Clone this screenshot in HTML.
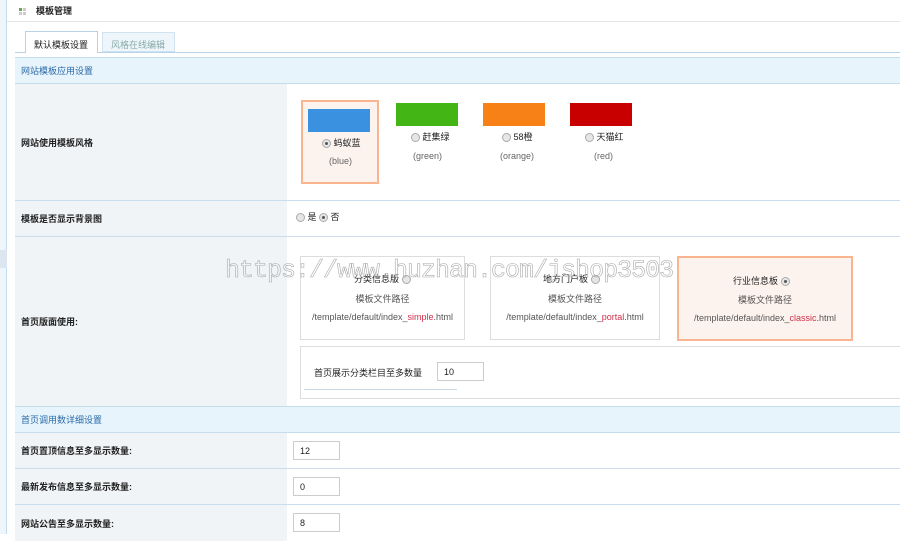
<!DOCTYPE html>
<html><head><meta charset="utf-8"><style>
*{margin:0;padding:0;box-sizing:border-box}
body{width:900px;height:534px;overflow:hidden;background:#fff;font-family:"Liberation Sans","Noto Sans CJK SC",sans-serif;font-size:9px;color:#222;position:relative}
.a{position:absolute}
.lbl{position:absolute;left:15px;width:272px;background:#f1f4f7;border-bottom:1px solid #c9ddee;padding-left:6px;font-weight:bold;font-size:9px;display:flex;align-items:center}
.rowline{position:absolute;left:287px;right:0;border-bottom:1px solid #c9ddee}
.sec{position:absolute;left:15px;right:0;background:#e8f4fc;border-top:1px solid #c5dced;border-bottom:1px solid #c5dced;color:#2a6aa8;font-size:9px;padding-left:6px;display:flex;align-items:center}
.radio{display:inline-block;width:9px;height:9px;border-radius:50%;border:1px solid #aaa;background:#e6e6e6;vertical-align:middle;position:relative}
.radio.on::after{content:"";position:absolute;left:2px;top:2px;width:3px;height:3px;border-radius:50%;background:#555}
.inp{position:absolute;border:1px solid #ccc;background:#fff;font-size:9px;padding-left:6px;display:flex;align-items:center;height:19px}
.card{position:absolute;border:1px solid #ddd;text-align:center;font-size:9px;color:#555}
.red{color:#d0304a}
</style></head><body>
<div class="a" style="left:0;top:0;width:7px;height:534px;background:#eef5fb;border-right:1px solid #c5dced"></div>
<div class="a" style="left:0;top:250px;width:7px;height:18px;background:#dbe6f0"></div>
<div class="a" style="left:7px;top:0;right:0;height:22px;border-bottom:1px solid #e6e6e6;background:#fff"></div>
<div class="a" style="left:19px;top:8px;width:3px;height:3px;background:#6aa84f"></div>
<div class="a" style="left:23px;top:8px;width:3px;height:3px;background:#ccc"></div>
<div class="a" style="left:19px;top:12px;width:3px;height:3px;background:#ccc"></div>
<div class="a" style="left:23px;top:12px;width:3px;height:3px;background:#ccc"></div>
<div class="a" style="left:36px;top:4px;font-size:9px;font-weight:bold">模板管理</div>
<div class="a" style="left:15px;top:52px;right:0;border-top:1px solid #b5d2e6"></div>
<div class="a" style="left:25px;top:31px;width:73px;height:22px;border:1px solid #b5d2e6;border-bottom:none;background:#fff;font-size:9px;padding:6px 0 0 8px">默认模板设置</div>
<div class="a" style="left:102px;top:32px;width:73px;height:20px;border:1px solid #cfe3f0;background:#eef6fb;color:#8aa;font-size:9px;padding:5px 0 0 8px">风格在线编辑</div>
<div class="a" style="left:15px;top:57px;width:1px;height:477px;background:#c5dced"></div>

<div class="sec" style="top:57px;height:27px">网站模板应用设置</div>
<div class="lbl" style="top:84px;height:117px">网站使用模板风格</div>
<div class="rowline" style="top:200px"></div>
<div class="card" style="left:301px;top:100px;width:78px;height:84px;background:#fdf3ee;border:2px solid #fbb490"></div>
<div class="a" style="left:308px;top:109px;width:62px;height:23px;background:#3a91e0"></div>
<div class="a" style="left:322px;top:136px;font-size:9px"><span class="radio on"></span> 蚂蚁蓝</div>
<div class="a" style="left:329px;top:156px;color:#666">(blue)</div>
<div class="a" style="left:396px;top:103px;width:62px;height:23px;background:#43b515"></div>
<div class="a" style="left:411px;top:130px"><span class="radio"></span> 赶集绿</div>
<div class="a" style="left:413px;top:151px;color:#666">(green)</div>
<div class="a" style="left:483px;top:103px;width:62px;height:23px;background:#f78116"></div>
<div class="a" style="left:502px;top:130px"><span class="radio"></span> 58橙</div>
<div class="a" style="left:500px;top:151px;color:#666">(orange)</div>
<div class="a" style="left:570px;top:103px;width:62px;height:23px;background:#c80000"></div>
<div class="a" style="left:585px;top:130px"><span class="radio"></span> 天猫红</div>
<div class="a" style="left:594px;top:151px;color:#666">(red)</div>

<div class="lbl" style="top:201px;height:36px">模板是否显示背景图</div>
<div class="rowline" style="top:236px"></div>
<div class="a" style="left:296px;top:210px"><span class="radio"></span> 是 <span class="radio on"></span> 否</div>

<div class="lbl" style="top:237px;height:170px">首页版面使用:</div>
<div class="card" style="left:300px;top:256px;width:165px;height:84px"></div>
<div class="a" style="left:354px;top:272px">分类信息版 <span class="radio"></span></div>
<div class="a" style="left:300px;top:292px;width:165px;text-align:center;color:#555">模板文件路径</div>
<div class="a" style="left:300px;top:312px;width:165px;text-align:center;color:#555">/template/default/index_<span class="red">simple</span>.html</div>
<div class="card" style="left:490px;top:256px;width:170px;height:84px"></div>
<div class="a" style="left:543px;top:272px">地方门户板 <span class="radio"></span></div>
<div class="a" style="left:490px;top:292px;width:170px;text-align:center;color:#555">模板文件路径</div>
<div class="a" style="left:490px;top:312px;width:170px;text-align:center;color:#555">/template/default/index_<span class="red">portal</span>.html</div>
<div class="card" style="left:677px;top:256px;width:176px;height:85px;background:#fdf3ee;border:2px solid #fbb490"></div>
<div class="a" style="left:733px;top:274px">行业信息板 <span class="radio on"></span></div>
<div class="a" style="left:677px;top:293px;width:176px;text-align:center;color:#555">模板文件路径</div>
<div class="a" style="left:677px;top:313px;width:176px;text-align:center;color:#555">/template/default/index_<span class="red">classic</span>.html</div>
<div class="a" style="left:300px;top:346px;width:600px;height:53px;border:1px solid #ddd;border-right:none"></div>
<div class="a" style="left:314px;top:366px">首页展示分类栏目至多数量</div>
<div class="inp" style="left:437px;top:362px;width:47px">10</div>
<div class="a" style="left:304px;top:389px;width:153px;border-top:1px solid #ccd8e4"></div>
<div class="a" style="left:225px;top:256px;font-family:'Liberation Mono',monospace;font-size:25px;color:transparent;-webkit-text-stroke:0.6px #aaa;letter-spacing:-1px">https://www.huzhan.com/jshop3503</div>

<div class="sec" style="top:406px;height:27px">首页调用数详细设置</div>
<div class="lbl" style="top:433px;height:36px">首页置顶信息至多显示数量:</div>
<div class="rowline" style="top:468px"></div>
<div class="inp" style="left:293px;top:441px;width:47px">12</div>
<div class="lbl" style="top:469px;height:36px">最新发布信息至多显示数量:</div>
<div class="rowline" style="top:504px"></div>
<div class="inp" style="left:293px;top:477px;width:47px">0</div>
<div class="lbl" style="top:505px;height:36px;border-bottom:none">网站公告至多显示数量:</div>
<div class="inp" style="left:293px;top:513px;width:47px">8</div>
</body></html>
